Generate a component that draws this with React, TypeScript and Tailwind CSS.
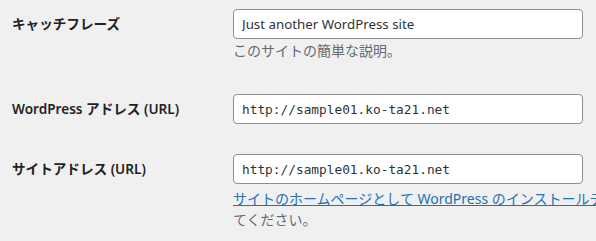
const FONT = "font-['Noto_Sans','Noto_Sans_CJK_JP',sans-serif]";

function Row({ label, children, className = '' }: { label: string; children: React.ReactNode; className?: string }) {
  return (
    <div className={`flex ${className}`}>
      <div className="w-[233px] shrink-0 pl-[12px] h-[30px] leading-[30px] text-[13.6px] font-semibold text-[#1d2327] whitespace-nowrap">
        {label}
      </div>
      <div className="shrink-0">{children}</div>
    </div>
  );
}

export default function App() {
  return (
    <div className={`w-[596px] h-[241px] overflow-hidden bg-[#f0f0f1] pt-[9px] ${FONT}`}>
      <Row label="キャッチフレーズ">
        <input
          readOnly
          value="Just another WordPress site"
          className="w-[350px] h-[30px] px-[8px] rounded-[4px] border border-[#8c8f94] bg-white text-[13.3px] text-[#2c3338] outline-none"
        />
        <p className="mt-[1px] text-[14px] leading-[21px] text-[#646970]">このサイトの簡単な説明。</p>
      </Row>

      <Row label="WordPress アドレス (URL)" className="mt-[33px]">
        <input
          readOnly
          value="http://sample01.ko-ta21.net"
          className="w-[350px] h-[30px] px-[8px] rounded-[4px] border border-[#8c8f94] bg-white text-[12.8px] text-[#2c3338] font-['DejaVu_Sans_Mono',monospace] outline-none"
        />
      </Row>

      <Row label="サイトアドレス (URL)" className="mt-[30px]">
        <input
          readOnly
          value="http://sample01.ko-ta21.net"
          className="w-[350px] h-[30px] px-[8px] rounded-[4px] border border-[#8c8f94] bg-white text-[12.8px] text-[#2c3338] font-['DejaVu_Sans_Mono',monospace] outline-none"
        />
        <p className="mt-[4px] w-[600px] text-[14px] leading-[21px] text-[#646970] whitespace-nowrap">
          <a href="#" className="text-[#2271b1] underline">
            サイトのホームページとして WordPress のインストールディレクトリとは異なる場所を使う
          </a>
          場合以外は、同じアドレスを入力し
          <br />
          てください。
        </p>
      </Row>
    </div>
  );
}
